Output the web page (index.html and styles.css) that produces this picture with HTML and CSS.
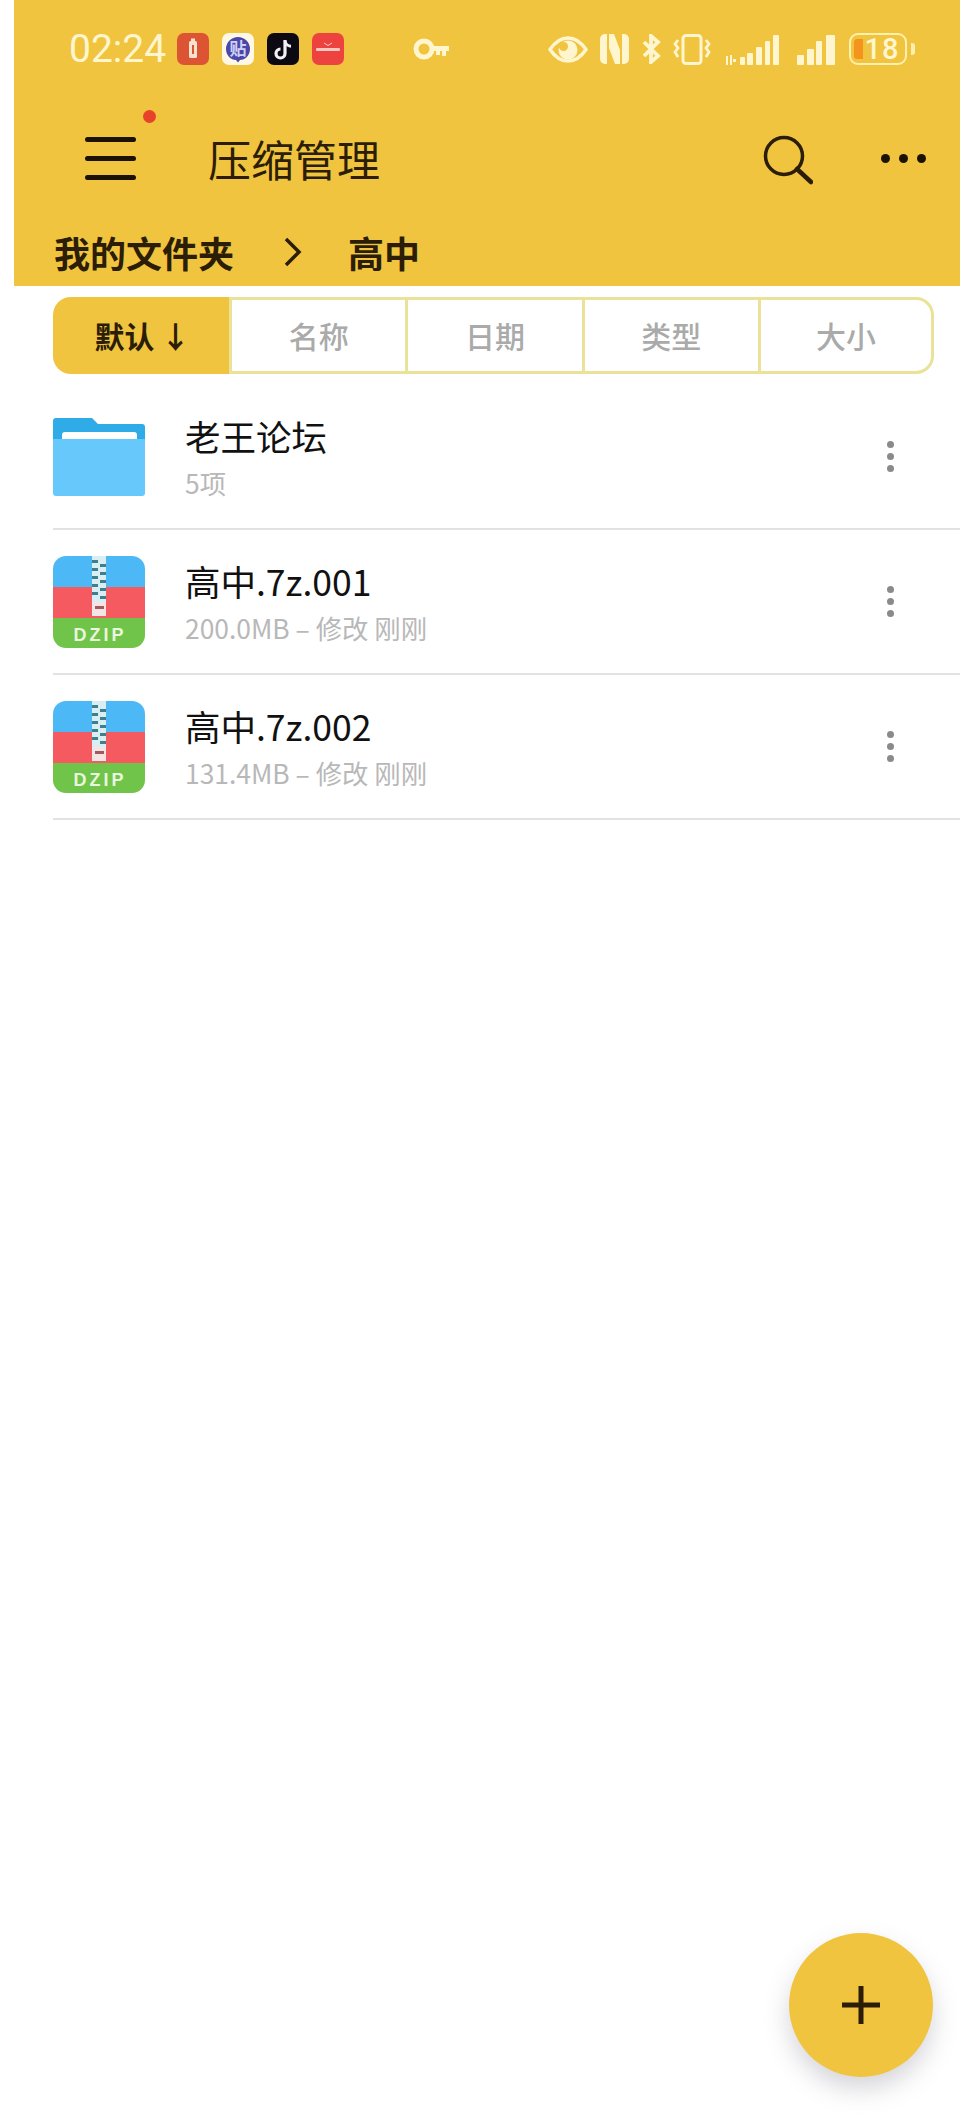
FILE: index.html
```html
<!DOCTYPE html>
<html lang="zh">
<head>
<meta charset="utf-8">
<title>压缩管理</title>
<meta name="viewport" content="width=device-width, initial-scale=1">
<link rel="stylesheet" href="styles.css">
</head>
<body>

<div class="header">
  <div class="status">
    <span class="time">02:24</span>
    <div class="apps">
      <svg class="app" viewBox="0 0 32 32"><rect width="32" height="32" rx="7" fill="#dd5435"/><rect x="12" y="8" width="8" height="17" rx="1.5" fill="#f6e3cf"/><rect x="14" y="5.5" width="4" height="3" fill="#f6e3cf"/><rect x="15" y="12" width="2" height="9" fill="#dd5435"/></svg>
      <svg class="app" viewBox="0 0 32 32"><rect width="32" height="32" rx="7" fill="#fff8e6"/><path d="M16 4a12 12 0 0 1 12 12c0 6.500-5 11-10 11l-2 2.500-2-2.500C9 27 4 22.500 4 16A12 12 0 0 1 16 4z" fill="#4a48a8"/><text class="app-label" x="16" y="22" text-anchor="middle">贴</text></svg>
      <svg class="app" viewBox="0 0 32 32"><rect width="32" height="32" rx="7" fill="#0b0a12"/><path d="M18 7v13.500a4.500 4.500 0 1 1-4.500-4.500" fill="none" stroke="#f2f0f4" stroke-width="3.200"/><path d="M18 8c.6 3 2.800 5 6 5.200" fill="none" stroke="#f2f0f4" stroke-width="3"/></svg>
      <svg class="app" viewBox="0 0 32 32"><rect width="32" height="32" rx="7" fill="#ee4240"/><path d="M12 10l4 2.500 4-2.500" fill="none" stroke="#f9c9c0" stroke-width="1"/><rect x="4" y="15" width="24" height="3" rx="1" fill="#f9c9c0"/></svg>
    </div>
    <svg class="key" viewBox="0 0 36 24"><circle cx="11" cy="12" r="8" fill="none" stroke="#fff6cf" stroke-width="5"/><path d="M18 9h18v5h-3v5h-4v-5h-2v4h-4v-4h-5z" fill="#fff6cf"/></svg>

    <div class="sys">
      <svg class="ic-eye" viewBox="0 0 40 27"><path d="M2 13.500C8 4.500 14 2 20 2s12 2.500 18 11.500C32 22.500 26 25 20 25S8 22.500 2 13.500z" fill="none" stroke="#fff6cf" stroke-width="3.400"/><circle cx="20" cy="14" r="9.500" fill="#fff6cf"/><circle cx="15.500" cy="10.500" r="4.500" fill="#f0c43f"/></svg>
      <svg class="ic-nfc" viewBox="0 0 29 30"><g fill="#fff6cf"><path d="M5 0h2v30H5a5 5 0 0 1-5-5V5a5 5 0 0 1 5-5z"/><path d="M24 0a5 5 0 0 1 5 5v20a5 5 0 0 1-5 5h-2V0z"/><path d="M9 0h5l6 16v14h-5L9 14z"/></g></svg>
      <svg class="ic-bt" viewBox="0 0 20 30"><path d="M3 8l14 14-7 6V2l7 6L3 22" fill="none" stroke="#fff6cf" stroke-width="3.800"/></svg>
      <svg class="ic-vib" viewBox="0 0 38 31"><rect x="10" y="1.500" width="18" height="28" rx="3" fill="none" stroke="#fff6cf" stroke-width="3"/><path d="M5 6L2 10l3 4-3 4 3 5M33 6l3 4-3 4 3 4-3 5" fill="none" stroke="#fff6cf" stroke-width="2.800"/></svg>
      <svg class="ic-sig-a" viewBox="0 0 55 31"><g fill="#fff6cf"><rect x="1" y="22" width="2" height="9"/><rect x="5" y="21" width="2" height="10"/><rect x="8" y="25" width="3" height="3"/><rect x="15" y="23" width="5" height="8" rx="1"/><rect x="22" y="19" width="6" height="12" rx="1"/><rect x="31" y="13" width="6" height="18" rx="1"/><rect x="40" y="7" width="5" height="24" rx="1"/><rect x="48" y="1" width="6" height="30" rx="1"/></g></svg>
      <svg class="ic-sig-b" viewBox="0 0 38 31"><g fill="#fff6cf"><rect y="21" width="7" height="10" rx="1"/><rect x="10" y="15" width="7" height="16" rx="1"/><rect x="19" y="7" width="6" height="24" rx="1"/><rect x="29" y="1" width="9" height="30" rx="1"/></g></svg>
      <div class="battery">
        <div class="battery-level"></div>
        <span class="battery-num">18</span>
      </div>
      <div class="battery-nub"></div>
    </div>
  </div>

  <div class="appbar">
    <div class="menu">
      <span class="bar"></span>
      <span class="bar"></span>
      <span class="bar"></span>
      <span class="badge"></span>
    </div>
    <div class="title">压缩管理</div>
    <svg class="search" viewBox="0 0 50 50"><circle cx="21" cy="21" r="18.500" fill="none" stroke="#2b1d06" stroke-width="3.500"/><path d="M34 34l14 13" stroke="#2b1d06" stroke-width="4.500" stroke-linecap="round"/></svg>
    <div class="more">
      <span class="more-dot"></span>
      <span class="more-dot"></span>
      <span class="more-dot"></span>
    </div>
  </div>

  <div class="crumbs">
    <span>我的文件夹</span>
    <svg class="chevron" viewBox="0 0 18 30"><path d="M2 2l13 13L2 28" fill="none" stroke="#2b1d06" stroke-width="3.500"/></svg>
    <span>高中</span>
  </div>
</div>

<div class="tabs">
  <div class="tab active">默认<span class="sort-arrow">↓</span></div>
  <div class="tab">名称</div>
  <div class="tab">日期</div>
  <div class="tab">类型</div>
  <div class="tab last">大小</div>
</div>

<div class="list">
  <div class="item">
    <svg class="file-icon" viewBox="0 0 92 92"><path d="M0 10a3 3 0 0 1 3-3h36l6 6h44a3 3 0 0 1 3 3v30H0z" fill="#2fabe8"/><path d="M9 29v-5a3 3 0 0 1 3-3h69a3 3 0 0 1 3 3v5z" fill="#fff"/><path d="M0 28h92v54a3 3 0 0 1-3 3H3a3 3 0 0 1-3-3z" fill="#66c8fb"/></svg>
    <div class="item-text">
      <div class="name">老王论坛</div>
      <div class="sub">5项</div>
    </div>
    <div class="kebab"><span></span><span></span><span></span></div>
  </div>

  <div class="item">
    <svg class="file-icon" viewBox="0 0 92 92"><use href="#dzip"/></svg>
    <div class="item-text">
      <div class="name">高中.7z.001</div>
      <div class="sub">200.0MB – 修改 刚刚</div>
    </div>
    <div class="kebab"><span></span><span></span><span></span></div>
  </div>

  <div class="item">
    <svg class="file-icon" viewBox="0 0 92 92"><use href="#dzip"/></svg>
    <div class="item-text">
      <div class="name">高中.7z.002</div>
      <div class="sub">131.4MB – 修改 刚刚</div>
    </div>
    <div class="kebab"><span></span><span></span><span></span></div>
  </div>
</div>

<div class="fab">
  <svg class="fab-plus" viewBox="0 0 38 38"><path d="M0 19h38M19 0v38" stroke="#2b1d06" stroke-width="5"/></svg>
</div>

<svg class="defs" width="0" height="0">
  <defs>
    <clipPath id="dzip-clip"><rect width="92" height="92" rx="13"/></clipPath>
    <g id="dzip">
      <g clip-path="url(#dzip-clip)">
        <rect width="92" height="31" fill="#4cb8f6"/>
        <rect y="31" width="92" height="31" fill="#f55a60"/>
        <rect y="62" width="92" height="30" fill="#70c449"/>
      </g>
      <rect x="39" y="0" width="14" height="60" fill="#d9eef2"/>
      <path d="M39 4h6v3h-6zM47 8h6v3h-6zM39 12h6v3h-6zM47 16h6v3h-6zM39 20h6v3h-6zM47 24h6v3h-6zM39 28h6v3h-6zM47 32h6v3h-6zM39 36h6v3h-6zM47 40h6v3h-6z" fill="#3d7f8f"/>
      <rect x="40" y="46" width="13" height="13" rx="1" fill="#f6e3e3"/>
      <rect x="42" y="50" width="9" height="3" fill="#a05a60"/>
      <text class="dzip-label" x="47" y="85" text-anchor="middle">DZIP</text>
    </g>
  </defs>
</svg>

</body>
</html>
```

FILE: styles.css
```css
html, body {
  margin: 0;
  padding: 0;
}

body {
  position: relative;
  width: 960px;
  height: 2118px;
  overflow: hidden;
  background-color: #fff;
  font-family: "Noto Sans CJK SC", "Noto Sans", sans-serif;
  color: #111;
}

.header {
  margin-left: 14px;
  height: 286px;
  background-color: #f0c43f;
  color: #2b1d06;
}

/* status bar */
.status {
  display: flex;
  align-items: center;
  height: 32px;
  padding: 33px 45px 0 55px;
}

.time {
  font-family: Roboto, sans-serif;
  font-size: 39px;
  line-height: 32px;
  color: #fff6cf;
}

.apps {
  display: flex;
  gap: 13px;
  margin-left: 11px;
}

.app {
  display: block;
  width: 32px;
  height: 32px;
}

.app-label {
  font-size: 17px;
  font-weight: 700;
  fill: #cfd0f4;
}

.key {
  width: 36px;
  height: 24px;
  margin-left: 69px;
}

.sys {
  display: flex;
  align-items: center;
  gap: 12px;
  margin-left: auto;
}

.ic-eye { width: 40px; height: 27px; }
.ic-nfc { width: 29px; height: 30px; }
.ic-bt { width: 20px; height: 30px; }
.ic-vib { width: 38px; height: 31px; }
.ic-sig-a { width: 55px; height: 31px; margin-left: 2px; }
.ic-sig-b { width: 38px; height: 31px; margin-left: 5px; }

.battery {
  position: relative;
  display: flex;
  align-items: center;
  justify-content: center;
  box-sizing: border-box;
  width: 58px;
  height: 32px;
  margin-left: 2px;
  border: 2.5px solid #fff0b0;
  border-radius: 9px;
}

.battery-level {
  position: absolute;
  left: 3px;
  top: 4px;
  bottom: 4px;
  width: 9px;
  border-radius: 3px 0 0 3px;
  background-color: #f5941d;
}

.battery-num {
  position: relative;
  left: 4px;
  font-family: Roboto, sans-serif;
  font-size: 29px;
  font-weight: 500;
  line-height: 26px;
  letter-spacing: 1px;
  color: #fff6cf;
}

.battery-nub {
  width: 4px;
  height: 12px;
  margin-left: -8px;
  border-radius: 0 3px 3px 0;
  background-color: #fff0b0;
}

/* title row */
.appbar {
  display: flex;
  align-items: center;
  height: 60px;
  margin-top: 63px;
  padding: 0 34px 0 71px;
}

.menu {
  position: relative;
  display: flex;
  flex-direction: column;
  gap: 14px;
  width: 51px;
}

.bar {
  display: block;
  height: 5px;
  border-radius: 3px;
  background-color: #1c1204;
}

.badge {
  position: absolute;
  left: 58px;
  top: -27px;
  width: 13px;
  height: 13px;
  border-radius: 50%;
  background-color: #e8432a;
}

.title {
  margin-left: 72px;
  font-size: 43px;
  line-height: 60px;
}

.search {
  width: 50px;
  height: 50px;
  margin-top: 3px;
  margin-left: auto;
  margin-right: 68px;
}

.more {
  display: flex;
  gap: 9px;
}

.more-dot {
  width: 9px;
  height: 9px;
  border-radius: 50%;
  background-color: #1c1204;
}

/* breadcrumb */
.crumbs {
  display: flex;
  align-items: center;
  height: 50px;
  margin-top: 39px;
  padding-left: 40px;
  font-size: 36px;
  font-weight: 700;
  line-height: 50px;
}

.chevron {
  width: 18px;
  height: 30px;
  margin: 0 46px 0 50px;
}

/* sort tabs */
.tabs {
  display: grid;
  grid-template-columns: repeat(5, 1fr);
  width: 881px;
  height: 77px;
  margin: 11px 0 0 53px;
}

.tab {
  display: flex;
  align-items: center;
  justify-content: center;
  box-sizing: border-box;
  padding-bottom: 2px;
  border: 3px solid #ebe29a;
  border-right: none;
  font-size: 30px;
  font-weight: 500;
  color: #aaa;
}

.tab.active {
  border-color: #f0c43f;
  border-radius: 18px 0 0 18px;
  background-color: #f0c43f;
  color: #2b1d06;
  font-weight: 700;
}

.tab.last {
  border-right: 3px solid #ebe29a;
  border-radius: 0 18px 18px 0;
}

.sort-arrow {
  margin-left: 6px;
}

/* file list */
.list {
  margin-left: 53px;
  padding-top: 11px;
}

.item {
  display: flex;
  align-items: center;
  height: 143px;
  border-bottom: 2px solid #e2e2e2;
}

.file-icon {
  flex: none;
  width: 92px;
  height: 92px;
}

.defs {
  position: absolute;
}

.dzip-label {
  font-family: "Liberation Sans", sans-serif;
  font-size: 18px;
  font-weight: 700;
  letter-spacing: 3px;
  fill: #eaf6dd;
}

.item-text {
  margin-left: 40px;
  padding-bottom: 2px;
}

.name {
  font-size: 35.5px;
  line-height: 44px;
  color: #111;
}

.sub {
  margin-top: 10px;
  font-size: 26.4px;
  line-height: 30px;
  color: #b8b8b8;
}

.kebab {
  display: flex;
  flex-direction: column;
  gap: 5px;
  margin-left: auto;
  margin-right: 66px;
}

.kebab span {
  width: 7px;
  height: 7px;
  border-radius: 50%;
  background-color: #8a8a8a;
}

/* floating add button */
.fab {
  position: absolute;
  right: 27px;
  bottom: 41px;
  display: flex;
  align-items: center;
  justify-content: center;
  width: 144px;
  height: 144px;
  border-radius: 50%;
  background-color: #f0c43f;
  box-shadow: 0 12px 24px rgba(90, 90, 110, 0.25);
}

.fab-plus {
  width: 38px;
  height: 38px;
}
```
